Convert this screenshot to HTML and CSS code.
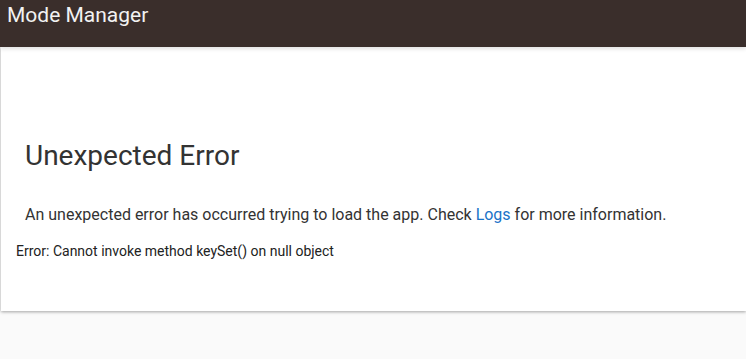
FILE: index.html
```html
<!DOCTYPE html>
<html lang="en">
<head>
    <meta charset="UTF-8">
    <title>Mode Manager</title>
    <link rel="stylesheet" href="styles.css">
</head>
<body>
    <header class="app-bar">
        <div class="app-title">Mode Manager</div>
    </header>

    <div class="card">
        <div class="error-box">
            <h1>Unexpected Error</h1>
            <p>An unexpected error has occurred trying to load the app. Check <a href="#">Logs</a> for more information.</p>
        </div>
        <div class="error-detail">Error: Cannot invoke method keySet() on null object</div>
    </div>
</body>
</html>
```

FILE: styles.css
```css
* {
    margin: 0;
    padding: 0;
    box-sizing: border-box;
}

body {
    font-family: Roboto, 'Noto Sans', sans-serif;
    background: #fafafa;
    min-height: 100vh;
}

.app-bar {
    background: #3a2e2b;
    height: 47px;
    padding: 3px 7px 0;
    position: relative;
    z-index: 1;
    box-shadow: 0 2px 4px rgba(0,0,0,0.12);
}

.app-title {
    color: #f2f2f2;
    font-size: 21px;
    line-height: 24px;
}

.card {
    background: white;
    height: 264px;
    margin-left: 1px;
    box-shadow: 0 1px 3px rgba(0,0,0,0.35);
    padding-top: 92px;
}

.error-box {
    padding: 0 24px;
}

h1 {
    font-size: 28px;
    font-weight: 400;
    color: #333;
    line-height: 34px;
    margin-bottom: 30px;
}

p {
    font-size: 16px;
    color: #333;
    line-height: 24px;
    margin-bottom: 15px;
}

a {
    color: #1a73c8;
    text-decoration: none;
}

.error-detail {
    padding-left: 15px;
    font-size: 14px;
    color: #222;
    line-height: 18px;
}
```
